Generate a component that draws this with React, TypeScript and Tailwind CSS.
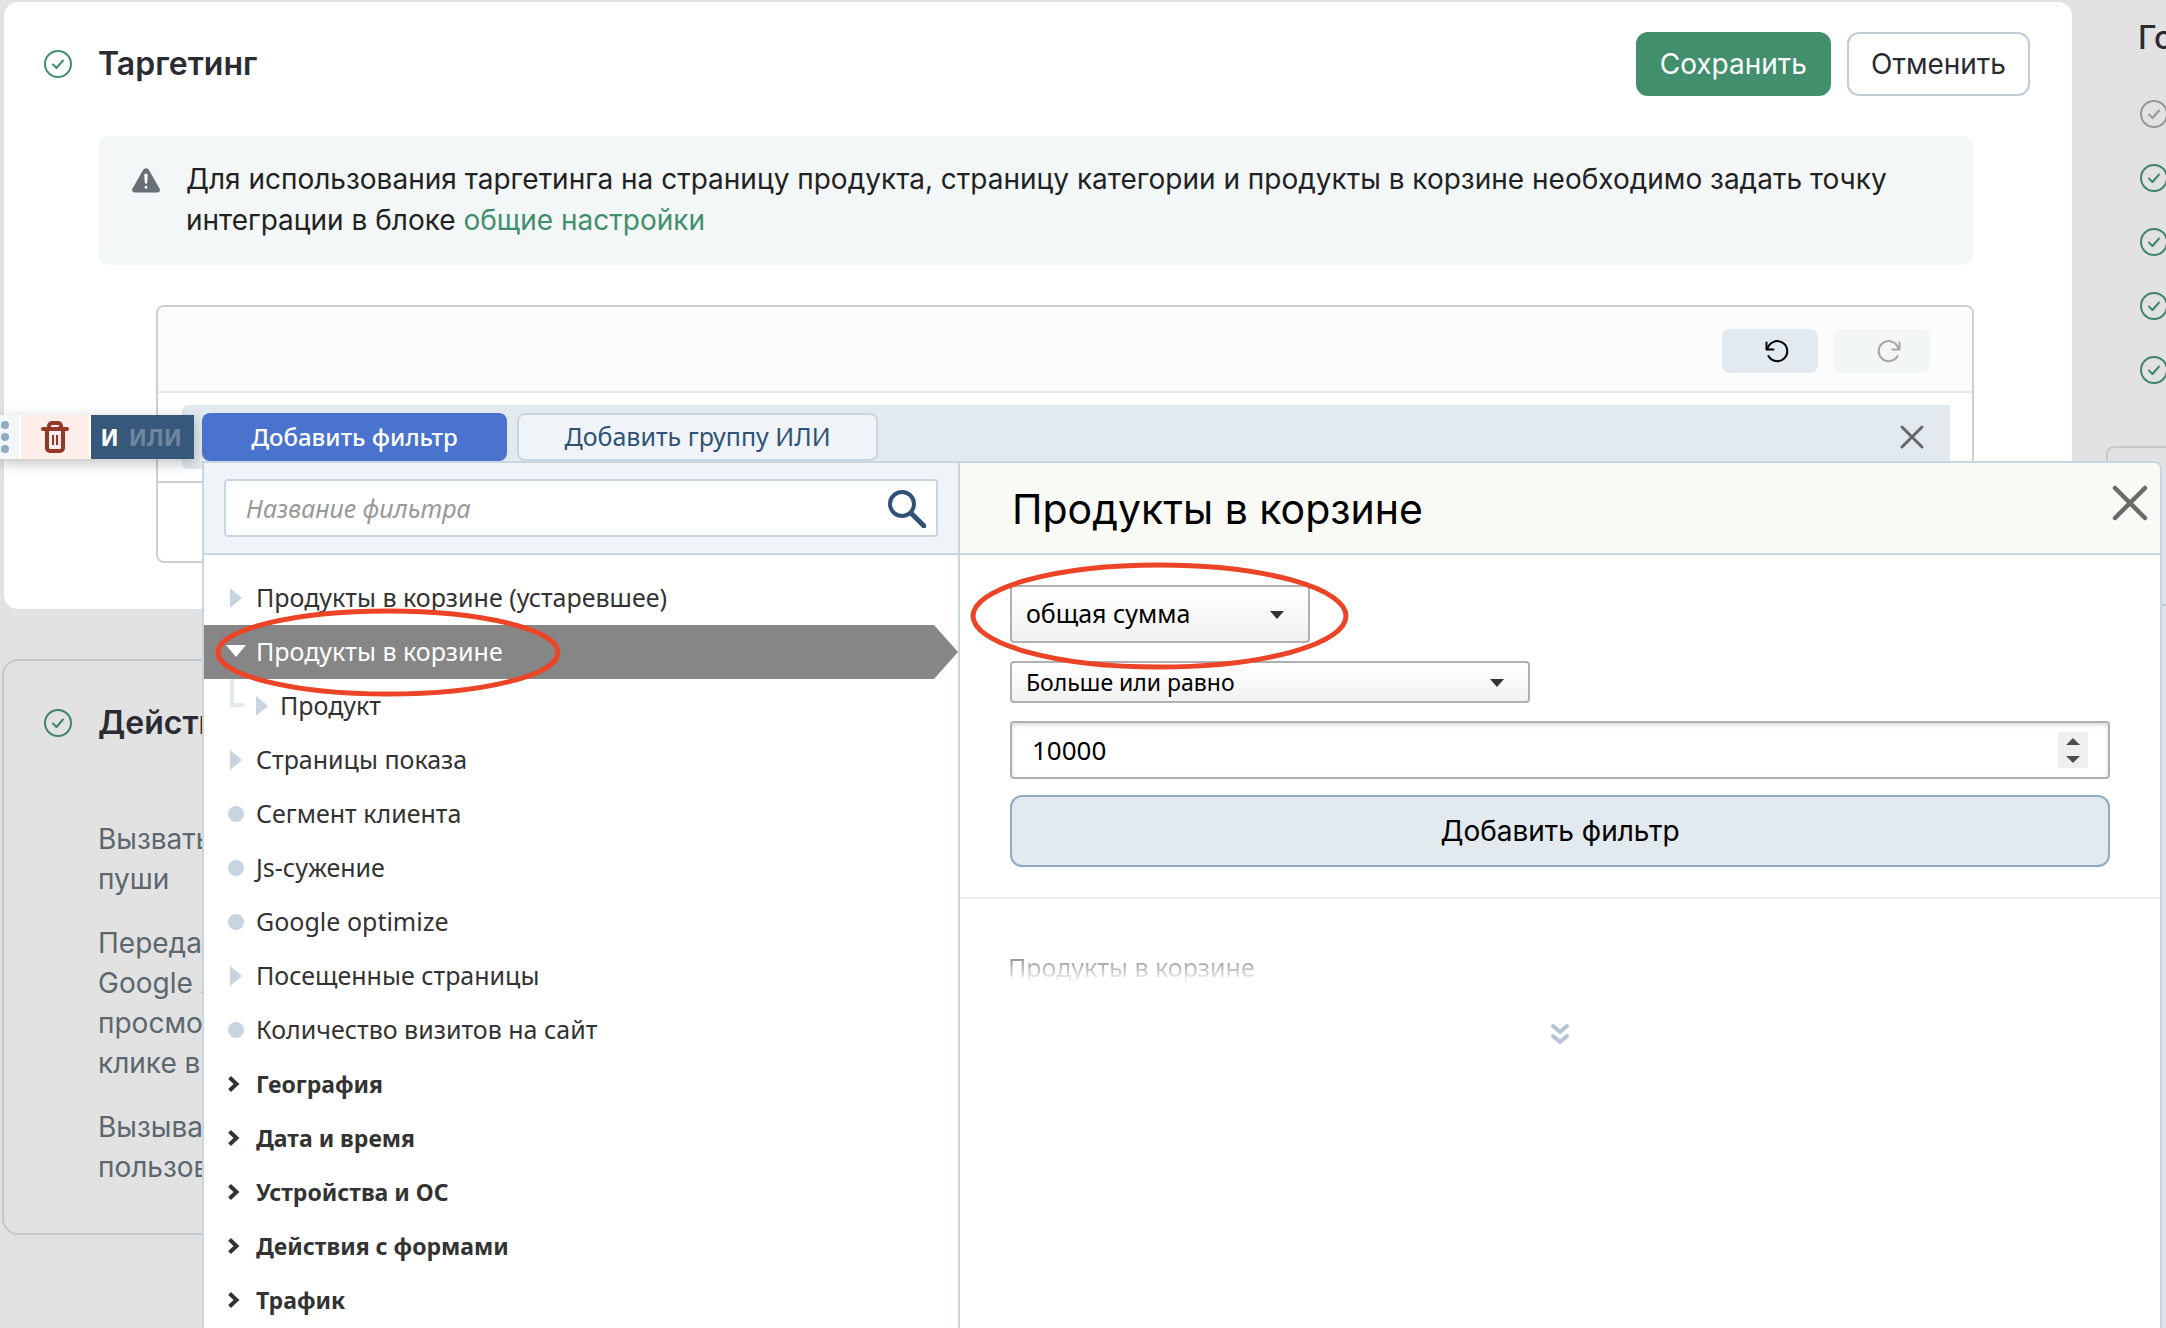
import React from 'react';

type Marker = 'triangle' | 'open' | 'dot' | 'chevron';

const filters: { label: string; marker: Marker; child?: boolean }[] = [
  { label: 'Продукты в корзине (устаревшее)', marker: 'triangle' },
  { label: 'Продукты в корзине', marker: 'open' },
  { label: 'Продукт', marker: 'triangle', child: true },
  { label: 'Страницы показа', marker: 'triangle' },
  { label: 'Сегмент клиента', marker: 'dot' },
  { label: 'Js-сужение', marker: 'dot' },
  { label: 'Google optimize', marker: 'dot' },
  { label: 'Посещенные страницы', marker: 'triangle' },
  { label: 'Количество визитов на сайт', marker: 'dot' },
  { label: 'География', marker: 'chevron' },
  { label: 'Дата и время', marker: 'chevron' },
  { label: 'Устройства и ОС', marker: 'chevron' },
  { label: 'Действия с формами', marker: 'chevron' },
  { label: 'Трафик', marker: 'chevron' },
];

function CheckCircle({ className }: { className: string }) {
  return (
    <svg viewBox="0 0 28 28" fill="none" stroke="currentColor" strokeWidth="2" strokeLinecap="round" strokeLinejoin="round" className={`size-7 shrink-0 ${className}`}>
      <circle cx="14" cy="14" r="13" />
      <path d="M9 14.5l3.5 3.5L19 10.5" />
    </svg>
  );
}

function Cross({ className, width }: { className: string; width: number }) {
  return (
    <svg viewBox="0 0 24 24" fill="none" stroke="currentColor" strokeWidth={width} strokeLinecap="round" className={className}>
      <path d="M2 2l20 20M22 2L2 22" />
    </svg>
  );
}

function Rotate({ flipped = false }: { flipped?: boolean }) {
  return (
    <svg viewBox="0 0 24 24" fill="none" stroke="currentColor" strokeWidth="2" strokeLinecap="round" strokeLinejoin="round" className={flipped ? 'size-6 -scale-x-100' : 'size-6'}>
      <path d="M1.5 3.5v7h7" />
      <path d="M2.5 10a10 10 0 1 1 1 7" />
    </svg>
  );
}

function RowMarker({ kind }: { kind: Marker }) {
  return (
    <svg viewBox="0 0 20 20" className="size-5 shrink-0">
      {kind === 'triangle' && <path d="M4 0l12 10L4 20z" fill="#c8d4e1" />}
      {kind === 'open' && <path d="M0 3h20L10 15z" fill="#fff" />}
      {kind === 'dot' && <circle cx="10" cy="10" r="8" fill="#c8d4e1" />}
      {kind === 'chevron' && <path d="M3.500 3.500l7 6.500-7 6.500" fill="none" stroke="#333" strokeWidth="4" />}
    </svg>
  );
}

function RedOval({ className }: { className: string }) {
  return (
    <svg className={`pointer-events-none absolute z-10 overflow-visible ${className}`}>
      <ellipse cx="50%" cy="50%" rx="50%" ry="50%" fill="none" stroke="#ec4426" strokeWidth="5" />
    </svg>
  );
}

function DownArrow({ className }: { className: string }) {
  return (
    <svg viewBox="0 0 14 8" className={`pointer-events-none absolute h-2 w-3.5 ${className}`}>
      <path d="M0 0h14L7 8z" fill="#333" />
    </svg>
  );
}

function FloatingTools() {
  return (
    <div className="absolute top-2.5 -left-[182px] z-10 flex h-11 w-[194px] shadow-[0_4px_14px_rgba(0,0,0,0.25)]">
      <button aria-label="Переместить" className="flex w-[19px] flex-col items-start justify-center gap-1 bg-[#f4f7fa] pl-px">
        <span className="size-2 rounded-full bg-[#8fabc1]" />
        <span className="size-2 rounded-full bg-[#8fabc1]" />
        <span className="size-2 rounded-full bg-[#8fabc1]" />
      </button>
      <button aria-label="Удалить" className="flex w-[72px] items-center justify-center border-x-2 border-white bg-[#fdeeea] text-[#963626]">
        <svg viewBox="0 0 28 32" fill="none" stroke="currentColor" className="h-8 w-7">
          <path d="M2 8h24" strokeWidth="4" strokeLinecap="round" />
          <path d="M8 7V5a3 3 0 0 1 3-3h6a3 3 0 0 1 3 3v2" strokeWidth="4" />
          <path d="M6 9v18a3 3 0 0 0 3 3h10a3 3 0 0 0 3-3V9" strokeWidth="4" />
          <path d="M12 14v10M16 14v10" strokeWidth="2" />
        </svg>
      </button>
      <button className="flex flex-1 items-center justify-end gap-2.5 bg-[#36587a] pr-3 text-[23px] font-bold">
        <span className="text-white">И</span>
        <span className="text-[#6e86a0]">ИЛИ</span>
      </button>
    </div>
  );
}

function FilterMenu() {
  return (
    <div className="absolute top-14 -right-[212px] left-5 flex rounded-tr-lg border-2 border-[#c8d6e1] bg-white text-[#333]">
      <div className="w-[756px] shrink-0 border-r-2 border-[#c8d6e1]">
        <div className="border-b-2 border-[#c8d6e1] bg-[#f0f4f8] px-5 py-4">
          <label className="flex h-[58px] items-center rounded-sm border-2 border-[#c8d6e1] bg-white pt-0.5 pr-2.5 pl-5">
            <input type="text" aria-label="Название фильтра" placeholder="Название фильтра" className="min-w-0 flex-1 text-[25px] italic outline-none placeholder:text-[#999]" />
            <svg viewBox="0 0 38 38" fill="none" stroke="#2f5377" strokeLinecap="round" className="size-[38px]">
              <circle cx="14" cy="14" r="12" strokeWidth="4" />
              <path d="M24 24l12 12" strokeWidth="5" />
            </svg>
          </label>
        </div>
        <ul className="pt-4 pb-8">
          {filters.map((f) => (
            <li key={f.label} className="relative h-[54px]">
              {f.marker === 'open' ? (
                <button className="flex h-full w-full items-center gap-2.5 bg-[#868686] pl-[22px] text-[25px] text-white [clip-path:polygon(0_0,calc(100%-24px)_0,100%_50%,calc(100%-24px)_100%,0_100%)]">
                  <RowMarker kind={f.marker} />
                  {f.label}
                </button>
              ) : f.child ? (
                <button className="flex h-full w-full items-center gap-2 pl-[26px] text-[25px]">
                  <span className="mb-[26px] h-7 w-3.5 border-b-4 border-l-4 border-[#e2e9ef]" />
                  <span className="flex items-center gap-2">
                    <RowMarker kind={f.marker} />
                    {f.label}
                  </span>
                </button>
              ) : (
                <button className={f.marker === 'chevron' ? 'flex h-full w-full items-center gap-2.5 pl-[22px] text-[23px] font-bold' : 'flex h-full w-full items-center gap-2.5 pl-[22px] text-[25px]'}>
                  <RowMarker kind={f.marker} />
                  {f.label}
                </button>
              )}
              {f.marker === 'open' && <RedOval className="-top-3.5 left-3.5 h-[83px] w-[340px]" />}
            </li>
          ))}
        </ul>
      </div>

      <div className="min-w-0 flex-1">
        <div className="flex h-[92px] items-center justify-between rounded-tr-md border-b-2 border-[#c8d6e1] bg-[#f9faf6] pr-3 pl-[52px]">
          <h3 className="pt-1 font-[Inter,sans-serif] text-[41px] text-black">Продукты в корзине</h3>
          <button aria-label="Закрыть" className="mb-2.5 text-[#6a6a6a]">
            <Cross className="size-9" width={3} />
          </button>
        </div>
        <div className="flex flex-col border-b-2 border-[#ececec] px-[50px] py-[30px] text-black">
          <div className="relative mb-[18px] w-[300px]">
            <select aria-label="Показатель" className="block h-[58px] w-full appearance-none rounded border-2 border-[#b0b0b4] bg-linear-to-b from-white to-[#f2f2f2] pl-3.5 text-[25px]">
              <option>общая сумма</option>
            </select>
            <DownArrow className="top-[26px] right-[26px]" />
            <RedOval className="-top-[20px] -left-[37px] h-[102px] w-[373px]" />
          </div>
          <div className="relative mb-[18px] w-[520px]">
            <select aria-label="Условие" className="block h-[42px] w-full appearance-none rounded border-2 border-[#b0b0b4] bg-linear-to-b from-white to-[#f2f2f2] pl-3.5 text-[23px]">
              <option>Больше или равно</option>
            </select>
            <DownArrow className="top-[18px] right-[26px]" />
          </div>
          <div className="mb-4 flex h-[58px] items-center rounded border-2 border-[#b0b0b4] pr-5 pl-5 shadow-[inset_0_2px_4px_rgba(0,0,0,0.15)]">
            <input type="text" inputMode="numeric" aria-label="Значение" defaultValue="10000" className="min-w-0 flex-1 bg-transparent text-[26px] outline-none" />
            <span className="flex h-9 w-[30px] flex-col bg-[#efefef] text-[#4d4d4d]">
              <button aria-label="Увеличить" className="flex flex-1 items-center justify-center">
                <svg viewBox="0 0 14 7" className="h-[7px] w-3.5"><path d="M0 7h14L7 0z" fill="currentColor" /></svg>
              </button>
              <button aria-label="Уменьшить" className="flex flex-1 items-center justify-center">
                <svg viewBox="0 0 14 7" className="h-[7px] w-3.5"><path d="M0 0h14L7 7z" fill="currentColor" /></svg>
              </button>
            </span>
          </div>
          <button className="h-[72px] rounded-xl border-2 border-[#8faac1] bg-[#e2e9ef] font-[Inter,sans-serif] text-[28px]">Добавить фильтр</button>
        </div>
        <div className="px-12 pt-12">
          <p className="bg-linear-to-b from-[#888] from-20% to-white to-90% bg-clip-text text-[25px] leading-10 text-transparent">Продукты в корзине</p>
        </div>
        <button aria-label="Показать полностью" className="mx-auto mt-9 block text-[#b5c3d2]">
          <svg viewBox="0 0 20 22" fill="none" stroke="currentColor" strokeWidth="4" strokeLinecap="round" strokeLinejoin="round" className="h-[22px] w-5">
            <path d="M3 3l7 6 7-6M3 13l7 6 7-6" />
          </svg>
        </button>
      </div>
    </div>
  );
}

function FilterEditor() {
  return (
    <div className="mt-10 ml-[58px] rounded-lg border-2 border-[#cfcfcf]">
      <div className="flex justify-end gap-4 rounded-t-md border-b-2 border-[#e2e8ee] bg-[#fcfcfc] pt-[22px] pr-[42px] pb-[18px]">
        <button aria-label="Отменить действие" className="flex h-11 w-24 items-center justify-center rounded-lg bg-[#e2e9ef] pl-3.5 text-black">
          <Rotate />
        </button>
        <button aria-label="Повторить действие" className="flex h-11 w-24 items-center justify-center rounded-lg bg-[#f2f6f7] pl-3.5 text-[#a6a6a6]">
          <Rotate flipped />
        </button>
      </div>
      <div className="border-b-2 border-[#cfcfcf] py-3 pr-[22px] pl-6">
        <div className="relative flex h-16 items-start gap-2.5 rounded-l-md bg-[#e2e9ef] px-5 pt-2 font-['Noto_Sans',sans-serif]">
          <FloatingTools />
          <button className="h-12 w-[305px] rounded-lg bg-[#4a73ce] text-2xl font-medium text-white">Добавить фильтр</button>
          <button className="h-12 w-[361px] rounded-lg border-2 border-[#c8d6e1] bg-[#f0f4f8] text-[25px] text-[#2f5377]">Добавить группу ИЛИ</button>
          <button aria-label="Удалить строку" className="mt-3 mr-1.5 ml-auto text-[#666]">
            <Cross className="size-6" width={3} />
          </button>
          <FilterMenu />
        </div>
      </div>
      <div className="h-[78px]" />
    </div>
  );
}

export default function App() {
  return (
    <div className="flex h-screen overflow-hidden bg-[#e2e2e2] font-[Inter,sans-serif] text-[28px] text-[#2b2b33]">
      <main className="min-w-0 flex-1 pl-0.5">
        <section className="relative z-10 rounded-2xl border-2 border-[#dce2e7] bg-white pb-[46px]">
          <header className="flex items-center pt-[30px] pr-[42px] pl-10">
            <CheckCircle className="text-[#418f6c]" />
            <h2 className="ml-[26px] text-[32px] leading-10 font-semibold">Таргетинг</h2>
            <button className="ml-auto h-16 rounded-xl bg-[#418f6c] px-6 text-white">Сохранить</button>
            <button className="ml-4 h-16 rounded-xl border-2 border-[#c2ccd6] bg-white px-[22px]">Отменить</button>
          </header>
          <div className="mt-10 mr-[98px] ml-[94px]">
            <div className="flex rounded-xl bg-[#f4f7f8] pt-[23px] pr-10 pb-6 pl-[34px] leading-[41px] text-[#222]">
              <svg viewBox="0 0 28 25" className="mt-[9px] mr-[26px] h-[25px] w-7 shrink-0">
                <path d="M11.2 1.8a3.3 3.3 0 0 1 5.600 0l10.800 19c1 1.800-.2 3.700-2.200 3.700H2.600C.6 24.500-.6 22.600.4 20.800z" fill="#667075" />
                <path d="M12.300 7.200a1.700 1.700 0 0 1 3.400 0l-.6 8.300h-2.200z" fill="#fff" />
                <rect x="12.800" y="18" width="2.400" height="2.600" fill="#fff" />
              </svg>
              <p>
                Для использования таргетинга на страницу продукта, страницу категории и продукты в корзине необходимо задать точку интеграции в блоке{' '}
                <a href="#general" className="text-[#418f6c]">общие настройки</a>
              </p>
            </div>
            <FilterEditor />
          </div>
        </section>

        <section className="mt-12 flex items-start rounded-2xl border-2 border-[#c2c9cf] pt-[42px] pb-[46px] pl-10">
          <CheckCircle className="mt-1.5 text-[#3f8565]" />
          <div className="ml-[26px] whitespace-nowrap">
            <h2 className="text-[32px] leading-10 font-semibold">Действия</h2>
            <div className="mt-[76px] flex flex-col gap-6 leading-10 text-[#5b676e]">
              <p>Вызвать<br />пуши</p>
              <p>Передать<br />Google A<br />просмотр<br />клике в</p>
              <p>Вызывать<br />пользов</p>
            </div>
          </div>
        </section>
      </main>

      <aside className="w-[92px] shrink-0 overflow-hidden pt-[18px] pl-8">
        <h2 className="pl-8 text-[32px] leading-10 font-medium">Го</h2>
        <ul className="mt-[42px] flex flex-col gap-9 pl-[34px]">
          <li><CheckCircle className="text-[#979797]" /></li>
          <li><CheckCircle className="text-[#3f8565]" /></li>
          <li><CheckCircle className="text-[#3f8565]" /></li>
          <li><CheckCircle className="text-[#3f8565]" /></li>
          <li><CheckCircle className="text-[#3f8565]" /></li>
        </ul>
        <div className="mt-[62px] h-40 w-80 rounded-lg border-2 border-[#c2c9cf]" />
      </aside>
    </div>
  );
}
